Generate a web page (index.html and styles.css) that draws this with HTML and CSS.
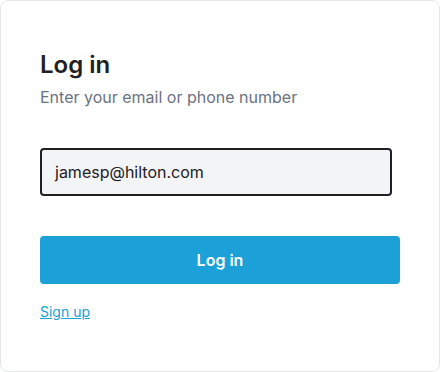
FILE: index.html
```html
<!DOCTYPE html>
<html lang="en">
<head>
<meta charset="utf-8">
<title>Log in</title>
<link rel="stylesheet" href="styles.css">
</head>
<body>
<div class="card">
  <h1 class="title">Log in</h1>
  <p class="subtitle">Enter your email or phone number</p>
  <div class="field">jamesp@hilton.com</div>
  <button class="btn" type="button">Log in</button>
  <a class="link" href="#">Sign up</a>
</div>
</body>
</html>
```

FILE: styles.css
```css
* { box-sizing: border-box; }
html, body { margin: 0; padding: 0; background: #fff; }
body { font-family: Inter, "Noto Sans", sans-serif; }
.card {
  width: 440px;
  height: 372px;
  border: 1px solid #e5e7eb;
  border-radius: 8px;
  padding: 48px 39px 40px;
  display: flex;
  flex-direction: column;
  align-items: flex-start;
}
.title {
  margin: 0;
  font-size: 24px;
  line-height: 32px;
  font-weight: 600;
  color: #1f2023;
}
.subtitle {
  margin: 4px 0 0;
  font-size: 16px;
  line-height: 24px;
  color: #6b7280;
}
.field {
  margin-top: 39px;
  width: 352px;
  height: 48px;
  border: 2px solid #1f2023;
  border-radius: 4px;
  background: #f3f4f6;
  padding: 0 13px;
  display: flex;
  align-items: center;
  font-size: 16px;
  color: #1f2023;
}
.btn {
  margin-top: 40px;
  width: 360px;
  height: 48px;
  border: 0;
  border-radius: 4px;
  background: #1ba0d8;
  color: #fff;
  font-family: inherit;
  font-size: 16px;
  font-weight: 600;
}
.link {
  margin-top: 18px;
  font-size: 14px;
  line-height: 20px;
  color: #1ba0d8;
  text-decoration: underline;
}
```
